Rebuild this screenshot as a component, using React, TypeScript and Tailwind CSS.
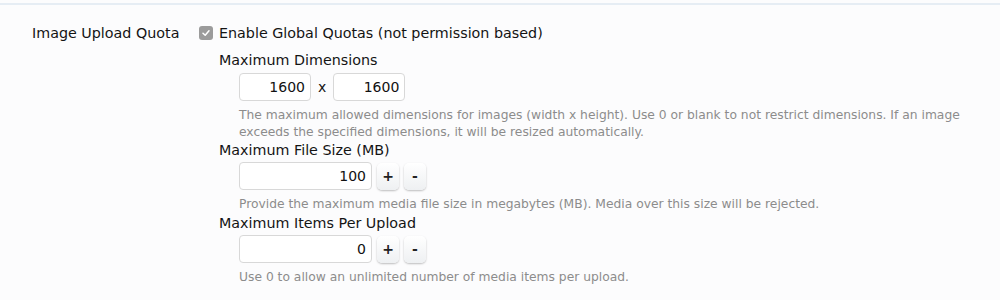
import React from 'react';

const Spinner: React.FC<{ value: string }> = ({ value }) => (
  <div className="flex items-center gap-[5px]">
    <input
      readOnly
      value={value}
      className="h-[28px] w-[133px] rounded-[4px] border border-[#d8d8d8] bg-white px-[5px] text-right text-[14px] text-[#111] outline-none"
    />
    <button className="h-[27px] w-[22px] rounded-[5px] bg-gradient-to-b from-white to-[#eef0f2] text-[14px] font-bold leading-none text-[#222] shadow-[0_1px_2px_rgba(0,0,0,0.25)]">
      +
    </button>
    <button className="h-[27px] w-[22px] rounded-[5px] bg-gradient-to-b from-white to-[#eef0f2] text-[14px] font-bold leading-none text-[#222] shadow-[0_1px_2px_rgba(0,0,0,0.25)]">
      -
    </button>
  </div>
);

const Hint: React.FC<{ children: React.ReactNode }> = ({ children }) => (
  <p className="mt-[6px] pl-[20px] text-[12.3px] leading-[17px] text-[#8c8c8c]">{children}</p>
);

export default function App() {
  return (
    <div className="h-[300px] w-[1000px] bg-[#fcfcfd] text-[#141414]" style={{ fontFamily: '"DejaVu Sans", sans-serif' }}>
      <div className="h-[5px] border-b-2 border-[#e6edf4]" />
      <div className="flex pt-[19px]">
        <div className="w-[199px] pl-[32px] text-[14.3px] leading-[18px]">Image Upload Quota</div>
        <div className="flex-1">
          <label className="flex items-center gap-[6px] text-[14.3px] leading-[18px]">
            <span className="flex h-[14px] w-[14px] items-center justify-center rounded-[3px] bg-[#9b9b9b]">
              <svg width="10" height="10" viewBox="0 0 10 10">
                <path d="M2 5.2 L4.2 7.3 L8 2.8" fill="none" stroke="white" strokeWidth="1.5" strokeLinecap="round" strokeLinejoin="round" />
              </svg>
            </span>
            Enable Global Quotas (not permission based)
          </label>

          <div className="pl-[20px]">
            <div className="mt-[9px] text-[14.3px] leading-[18px]">Maximum Dimensions</div>
            <div className="mt-[4px] flex items-center gap-[7px] pl-[20px]">
              <input readOnly value="1600" className="h-[28px] w-[72px] rounded-[4px] border border-[#d8d8d8] bg-white px-[5px] text-right text-[14px] text-[#111] outline-none" />
              <span className="text-[14px]">x</span>
              <input readOnly value="1600" className="h-[28px] w-[72px] rounded-[4px] border border-[#d8d8d8] bg-white px-[5px] text-right text-[14px] text-[#111] outline-none" />
            </div>
            <Hint>
              The maximum allowed dimensions for images (width x height). Use 0 or blank to not restrict dimensions. If an image
              <br />
              exceeds the specified dimensions, it will be resized automatically.
            </Hint>

            <div className="text-[14.3px] leading-[18px]">Maximum File Size (MB)</div>
            <div className="mt-[3px] pl-[20px]">
              <Spinner value="100" />
            </div>
            <Hint>Provide the maximum media file size in megabytes (MB). Media over this size will be rejected.</Hint>

            <div className="mt-[1px] text-[14.3px] leading-[18px]">Maximum Items Per Upload</div>
            <div className="mt-[3px] pl-[20px]">
              <Spinner value="0" />
            </div>
            <Hint>Use 0 to allow an unlimited number of media items per upload.</Hint>
          </div>
        </div>
      </div>
    </div>
  );
}
